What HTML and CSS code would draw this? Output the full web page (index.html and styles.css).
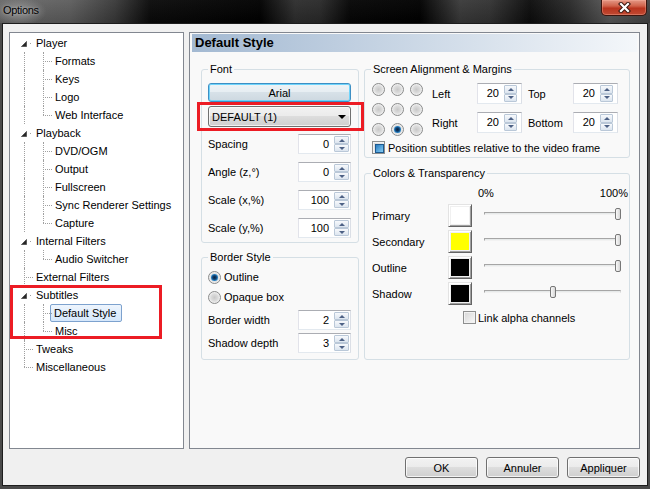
FILE: index.html
```html
<!DOCTYPE html>
<html>
<head>
<meta charset="utf-8">
<title>Options</title>
<link rel="stylesheet" href="styles.css">
</head>
<body>
<div class="window">
  <div class="titlebar">
    <span class="title">Options</span>
    <div class="close">
      <svg width="13" height="11" viewBox="0 0 13 11"><path d="M3 2 L10 9 M10 2 L3 9" stroke="#3b1710" stroke-width="4.2" stroke-linecap="square" fill="none"/><path d="M3 2 L10 9 M10 2 L3 9" stroke="#ffffff" stroke-width="2.2" stroke-linecap="square" fill="none"/></svg>
    </div>
  </div>
  <div class="client">
    <div class="main">
      <div class="tree">
        <div class="row"><span class="g ex"><svg width="6" height="6" viewBox="0 0 6 6"><polygon points="5.5,0.5 5.5,5.5 0.5,5.5" fill="#262626" stroke="#595959" stroke-width="1"/></svg></span><span class="lbl">Player</span></div>
        <div class="row"><span class="g v"></span><span class="g t"></span><span class="lbl">Formats</span></div>
        <div class="row"><span class="g v"></span><span class="g t"></span><span class="lbl">Keys</span></div>
        <div class="row"><span class="g v"></span><span class="g t"></span><span class="lbl">Logo</span></div>
        <div class="row"><span class="g v"></span><span class="g l"></span><span class="lbl">Web Interface</span></div>
        <div class="row"><span class="g ex"><svg width="6" height="6" viewBox="0 0 6 6"><polygon points="5.5,0.5 5.5,5.5 0.5,5.5" fill="#262626" stroke="#595959" stroke-width="1"/></svg></span><span class="lbl">Playback</span></div>
        <div class="row"><span class="g v"></span><span class="g t"></span><span class="lbl">DVD/OGM</span></div>
        <div class="row"><span class="g v"></span><span class="g t"></span><span class="lbl">Output</span></div>
        <div class="row"><span class="g v"></span><span class="g t"></span><span class="lbl">Fullscreen</span></div>
        <div class="row"><span class="g v"></span><span class="g t"></span><span class="lbl">Sync Renderer Settings</span></div>
        <div class="row"><span class="g v"></span><span class="g l"></span><span class="lbl">Capture</span></div>
        <div class="row"><span class="g ex"><svg width="6" height="6" viewBox="0 0 6 6"><polygon points="5.5,0.5 5.5,5.5 0.5,5.5" fill="#262626" stroke="#595959" stroke-width="1"/></svg></span><span class="lbl">Internal Filters</span></div>
        <div class="row"><span class="g v"></span><span class="g l"></span><span class="lbl">Audio Switcher</span></div>
        <div class="row"><span class="g t"></span><span class="lbl">External Filters</span></div>
        <div class="row"><span class="g ex"><svg width="6" height="6" viewBox="0 0 6 6"><polygon points="5.5,0.5 5.5,5.5 0.5,5.5" fill="#262626" stroke="#595959" stroke-width="1"/></svg></span><span class="lbl">Subtitles</span></div>
        <div class="row"><span class="g v"></span><span class="g t"></span><span class="lbl sel">Default Style</span></div>
        <div class="row"><span class="g v"></span><span class="g l"></span><span class="lbl">Misc</span></div>
        <div class="row"><span class="g t"></span><span class="lbl">Tweaks</span></div>
        <div class="row"><span class="g l"></span><span class="lbl">Miscellaneous</span></div>
      </div>
      <div class="page">
        <div class="page-head">Default Style</div>
        <div class="page-body">
          <div class="col col-left">
            <fieldset class="group font-group">
              <legend>Font</legend>
              <div class="btn font-btn">Arial</div>
              <div class="combo"><span>DEFAULT (1)</span><span class="combo-arrow"></span></div>
              <div class="frows">
                <div class="frow"><span>Spacing</span><div class="spin"><span class="val">0</span><span class="arrows"><span class="ab up"></span><span class="ab down"></span></span></div></div>
                <div class="frow"><span>Angle (z,°)</span><div class="spin"><span class="val">0</span><span class="arrows"><span class="ab up"></span><span class="ab down"></span></span></div></div>
                <div class="frow"><span>Scale (x,%)</span><div class="spin"><span class="val">100</span><span class="arrows"><span class="ab up"></span><span class="ab down"></span></span></div></div>
                <div class="frow"><span>Scale (y,%)</span><div class="spin"><span class="val">100</span><span class="arrows"><span class="ab up"></span><span class="ab down"></span></span></div></div>
              </div>
            </fieldset>
            <fieldset class="group border-group">
              <legend>Border Style</legend>
              <div class="opt"><span class="radio checked"></span>Outline</div>
              <div class="opt"><span class="radio"></span>Opaque box</div>
              <div class="frow bw"><span>Border width</span><div class="spin"><span class="val">2</span><span class="arrows"><span class="ab up"></span><span class="ab down"></span></span></div></div>
              <div class="frow sd"><span>Shadow depth</span><div class="spin"><span class="val">3</span><span class="arrows"><span class="ab up"></span><span class="ab down"></span></span></div></div>
            </fieldset>
          </div>
          <div class="col col-right">
            <fieldset class="group align-group">
              <legend>Screen Alignment &amp; Margins</legend>
              <div class="align-top">
                <div class="radio-grid">
                  <span class="radio"></span><span class="radio"></span><span class="radio"></span>
                  <span class="radio"></span><span class="radio"></span><span class="radio"></span>
                  <span class="radio"></span><span class="radio checked"></span><span class="radio"></span>
                </div>
                <div class="margins">
                  <span class="mlabel">Left</span>
                  <div class="spin sm"><span class="val">20</span><span class="arrows"><span class="ab up"></span><span class="ab down"></span></span></div>
                  <span class="mlabel r">Top</span>
                  <div class="spin sm"><span class="val">20</span><span class="arrows"><span class="ab up"></span><span class="ab down"></span></span></div>
                  <span class="mlabel">Right</span>
                  <div class="spin sm"><span class="val">20</span><span class="arrows"><span class="ab up"></span><span class="ab down"></span></span></div>
                  <span class="mlabel r">Bottom</span>
                  <div class="spin sm"><span class="val">20</span><span class="arrows"><span class="ab up"></span><span class="ab down"></span></span></div>
                </div>
              </div>
              <div class="check-row"><span class="check checked"></span><span>Position subtitles relative to the video frame</span></div>
            </fieldset>
            <fieldset class="group colors-group">
              <legend>Colors &amp; Transparency</legend>
              <div class="pct-row"><span>0%</span><span>100%</span></div>
              <div class="crows">
                <div class="crow"><span>Primary</span><span class="swatch"><span class="fill c-white"></span></span><span class="slider" style="--v:1"><span class="track"></span><span class="thumb"></span></span></div>
                <div class="crow"><span>Secondary</span><span class="swatch"><span class="fill c-yellow"></span></span><span class="slider" style="--v:1"><span class="track"></span><span class="thumb"></span></span></div>
                <div class="crow"><span>Outline</span><span class="swatch"><span class="fill c-black"></span></span><span class="slider" style="--v:1"><span class="track"></span><span class="thumb"></span></span></div>
                <div class="crow"><span>Shadow</span><span class="swatch"><span class="fill c-black"></span></span><span class="slider" style="--v:0.5"><span class="track"></span><span class="thumb"></span></span></div>
              </div>
              <div class="link-row"><span class="check"></span><span>Link alpha channels</span></div>
            </fieldset>
          </div>
        </div>
      </div>
    </div>
    <div class="buttons">
      <div class="btn">OK</div>
      <div class="btn">Annuler</div>
      <div class="btn">Appliquer</div>
    </div>
  </div>
  <div class="annot annot-tree"></div>
  <div class="annot annot-combo"></div>
</div>
</body>
</html>
```

FILE: styles.css
```css
* { box-sizing: border-box; }
html, body { margin: 0; padding: 0; }
body {
  width: 650px; height: 489px; overflow: hidden;
  background: #3c3c3c;
  font-family: "Liberation Sans", Arial, sans-serif;
  font-size: 11px; color: #000;
}
.window {
  position: relative; width: 650px; height: 489px;
  display: flex; flex-direction: column;
  background: #4a4a4a;
}
.titlebar {
  height: 23px; flex: none;
  display: flex; justify-content: space-between; align-items: flex-start;
  background:
    linear-gradient(rgba(255,255,255,0.04), rgba(0,0,0,0.15)),
    linear-gradient(90deg, #6a6a6a 0, #5e5e5e 70px, #3a3a3a 115px, #0a0a0a 150px, #000 260px, #2e2e2e 295px, #2a2a2a 320px, #050505 350px, #000 420px, #3a3a3a 460px, #333 490px, #0c0c0c 530px, #2a2a2a 570px, #5a5a5a 610px, #444 650px);
}
.title {
  padding: 4px 10px 6px 3px; line-height: 13px; font-size: 11px; letter-spacing: -0.3px;
  color: #000;
  background: radial-gradient(ellipse 55% 60% at 40% 50%, rgba(190,190,190,0.55), rgba(190,190,190,0) 100%);
  text-shadow: 0 0 3px rgba(255,255,255,0.45);
}
.close {
  width: 46px; height: 16px; margin-right: 3px;
  border: 1px solid #3c150e; border-top: 0; border-radius: 0 0 5px 5px;
  background: linear-gradient(#e49886 0, #d0624a 40%, #b9341e 55%, #c04a33 100%);
  box-shadow: inset 0 0 0 1px rgba(255,190,170,0.35);
  display: flex; align-items: center; justify-content: center;
}
.close svg { display: block; }

.client {
  flex: 1; min-height: 0;
  margin: 0 2px 3px;
  border: 1px solid #1d1d1d;
  background: #f0f0f0;
  padding: 8px 7px 7px 6px;
  display: flex; flex-direction: column; gap: 8px;
}
.main { display: flex; gap: 5px; height: 417px; flex: none; }

/* tree */
.tree {
  width: 175px; flex: none;
  border: 1px solid #828790; background: #fff;
  padding: 1px 0 0 4px;
}
.row { display: flex; height: 18px; align-items: center; }
.g { width: 19px; height: 18px; flex: none; position: relative; }
.g.v::before, .g.t::before, .g.l::before {
  content: ""; position: absolute; left: 10px; top: 0; height: 18px;
  border-left: 1px dotted #a0a0a0;
}
.g.l::before { height: 9px; }
.g.t::after, .g.l::after {
  content: ""; position: absolute; left: 10px; top: 9px; width: 9px;
  border-top: 1px dotted #a0a0a0;
}
.g.ex svg { position: absolute; left: 7px; top: 7px; display: block; }
.g.ex::after {
  content: ""; position: absolute; left: 16px; top: 9px; width: 1px; height: 1px;
  background: #a0a0a0;
}
.lbl { padding: 0 2px; line-height: 16px; white-space: nowrap; border: 1px solid transparent; }
.lbl.sel {
  margin-left: -2px; padding: 0 5px 0 3px;
  border-color: #7da2ce; border-radius: 2px;
  background: linear-gradient(#eef5fd, #d5e7fb);
}

/* page */
.page {
  flex: 1; border: 1px solid #828790; background: #f9f9f9;
  padding: 1px 2px; display: flex; flex-direction: column;
}
.page-head {
  height: 18px; flex: none;
  background: linear-gradient(90deg, #a3b9d2, #f4f7fa);
  font-weight: bold; font-size: 13px; line-height: 18px; padding-left: 3px;
}
.page-body { display: flex; gap: 5px; padding: 10px 0 0 9px; align-items: stretch; }
.col { display: flex; flex-direction: column; }
.col-left { width: 158px; }
.col-right { width: 266px; }

.group { margin: 0; border: 1px solid #d5dfe5; border-radius: 3px; min-width: 0; }
.group legend { padding: 0 2px; line-height: 14px; font-size: 11px; }
.font-group { padding: 7px 7px 4px 6px; }
.border-group { margin-top: 7px; padding: 6px 7px 6px 6px; }
.align-group { padding: 7px 7px 3px 7px; }
.colors-group { margin-top: 8px; padding: 6px 7px 0 7px; flex: 1; }
.align-group legend, .colors-group legend { margin-left: -1px; }

/* buttons */
.btn {
  display: flex; align-items: center; justify-content: center;
  height: 21px; border: 1px solid #707070; border-radius: 3px;
  background: linear-gradient(#f2f2f2 0, #ebebeb 50%, #dddddd 50%, #cfcfcf 100%);
  box-shadow: inset 0 0 0 1px rgba(255,255,255,0.75);
}
.buttons { display: flex; justify-content: flex-end; gap: 8px; height: 21px; flex: none; }
.buttons .btn { width: 73px; }
.font-btn {
  height: 19px; border-color: #3d8fc4;
  background: linear-gradient(#eef3f6 0, #e6edf2 50%, #d7e1e8 50%, #cdd8e0 100%);
  box-shadow: inset 0 0 0 1px #6fd4fb;
}
.combo {
  margin-top: 4px; height: 21px;
  display: flex; align-items: center; justify-content: space-between;
  padding: 0 4px 0 3px;
  border: 1px solid #707070; border-radius: 3px;
  background: linear-gradient(#f2f2f2 0, #ebebeb 50%, #dddddd 50%, #cfcfcf 100%);
  box-shadow: inset 0 0 0 1px rgba(255,255,255,0.7);
}
.combo-arrow {
  width: 0; height: 0;
  border-left: 4px solid transparent; border-right: 4px solid transparent;
  border-top: 4px solid #000;
}

/* spin rows */
.frows { margin-top: 7px; display: flex; flex-direction: column; gap: 8px; }
.frow { display: flex; justify-content: space-between; align-items: center; height: 20px; }
.bw { margin-top: 6px; }
.sd { margin-top: 3px; }
.spin {
  display: flex; width: 53px; height: 20px;
  border: 1px solid; border-color: #abadb3 #dbdfe6 #e3e9ef #e2e3ea;
  background: #fff; padding: 1px;
}
.val { flex: 1; text-align: right; padding-right: 5px; line-height: 16px; }
.arrows { width: 15px; display: flex; flex-direction: column; flex: none; }
.ab {
  flex: 1; border: 1px solid #bac8d8; border-radius: 1px;
  background: linear-gradient(#f7f9fc, #dce5ef);
  display: flex; align-items: center; justify-content: center;
}
.ab.up::after {
  content: ""; border-left: 3px solid transparent; border-right: 3px solid transparent;
  border-bottom: 3px solid #4d6185;
}
.ab.down::after {
  content: ""; border-left: 3px solid transparent; border-right: 3px solid transparent;
  border-top: 3px solid #4d6185;
}
.spin.sm { width: 45px; height: 21px; }
.spin.sm .arrows { width: 13px; margin-right: 3px; }
.spin.sm .val { line-height: 17px; }

/* radios & checks */
.opt { display: flex; align-items: center; gap: 3px; height: 14px; }
.opt + .opt { margin-top: 6px; }
.radio {
  width: 13px; height: 13px; flex: none; position: relative;
  border-radius: 50%; border: 1px solid #8a8b8b;
  background: radial-gradient(circle at 50% 50%, #c8c8c8 0, #dcdcdc 45%, #f4f4f4 75%, #dcdcdc 100%);
}
.radio.checked::after {
  content: ""; position: absolute; left: 2px; top: 2px; width: 7px; height: 7px; border-radius: 50%;
  background: radial-gradient(circle at 50% 50%, #0a2440 0, #0f3d6b 35%, #2c8fd6 70%, #1a5d98 100%);
}
.align-top { display: flex; }
.radio-grid {
  display: grid; grid-template-columns: repeat(3, 13px);
  column-gap: 6px; row-gap: 7px; align-content: start;
}
.margins {
  margin-left: 9px; display: grid;
  grid-template-columns: 45px 45px 51px 45px;
  grid-template-rows: 21px 21px; row-gap: 8px; align-items: center;
}
.mlabel.r { padding-left: 6px; }
.check-row { display: flex; align-items: center; gap: 3px; margin-top: 5px; height: 13px; }
.check {
  width: 13px; height: 13px; flex: none; position: relative;
  border: 1px solid #8e8f8f;
  background: linear-gradient(135deg, #d6d6d6, #f9f9f9);
  box-shadow: inset 0 0 0 1px #f2f2f2;
}
.check.checked::after {
  content: ""; position: absolute; left: 2px; top: 2px; width: 7px; height: 7px;
  border: 1px solid #1d5a90;
  background: linear-gradient(135deg, #2a7cc0, #86cdf4);
}

/* colors */
.pct-row { display: flex; justify-content: space-between; padding-left: 106px; margin-right: -6px; height: 14px; line-height: 14px; }
.crows { margin-top: 4px; display: flex; flex-direction: column; gap: 3px; }
.crow {
  display: grid; grid-template-columns: 76px 36px 137px;
  height: 23px; align-items: center;
}
.swatch {
  display: block; width: 24px; height: 23px; padding: 2px;
  border: 1px solid; border-color: #e3e3e3 #646464 #646464 #e3e3e3;
  background: #f0f0f0;
  box-shadow: inset 1px 1px 0 #fff, inset -1px -1px 0 #a0a0a0;
}
.fill { display: block; width: 100%; height: 100%; }
.c-white { background: #fff; }
.c-yellow { background: #ffff00; }
.c-black { background: #000; }
.slider { position: relative; height: 23px; display: block; }
.track {
  position: absolute; left: 0; right: 0; top: 8px; height: 3px;
  border: 1px solid; border-color: #a6a6a6 #d6d6d6 #f2f2f2 #a6a6a6;
  background: #e7eaea;
}
.thumb {
  position: absolute; top: 4px; width: 6px; height: 12px;
  left: calc((100% - 6px) * var(--v));
  border: 1px solid #777; border-radius: 2px;
  background: linear-gradient(90deg, #fafafa, #d6d6d6);
}
.link-row { display: flex; align-items: center; gap: 2px; margin-top: 6px; padding-left: 91px; height: 13px; }

/* annotations */
.annot { position: absolute; border: 3px solid #ec1c24; }
.annot-tree { left: 10px; top: 285px; width: 152px; height: 54px; }
.annot-combo { left: 197px; top: 102px; width: 167px; height: 29px; }
```
